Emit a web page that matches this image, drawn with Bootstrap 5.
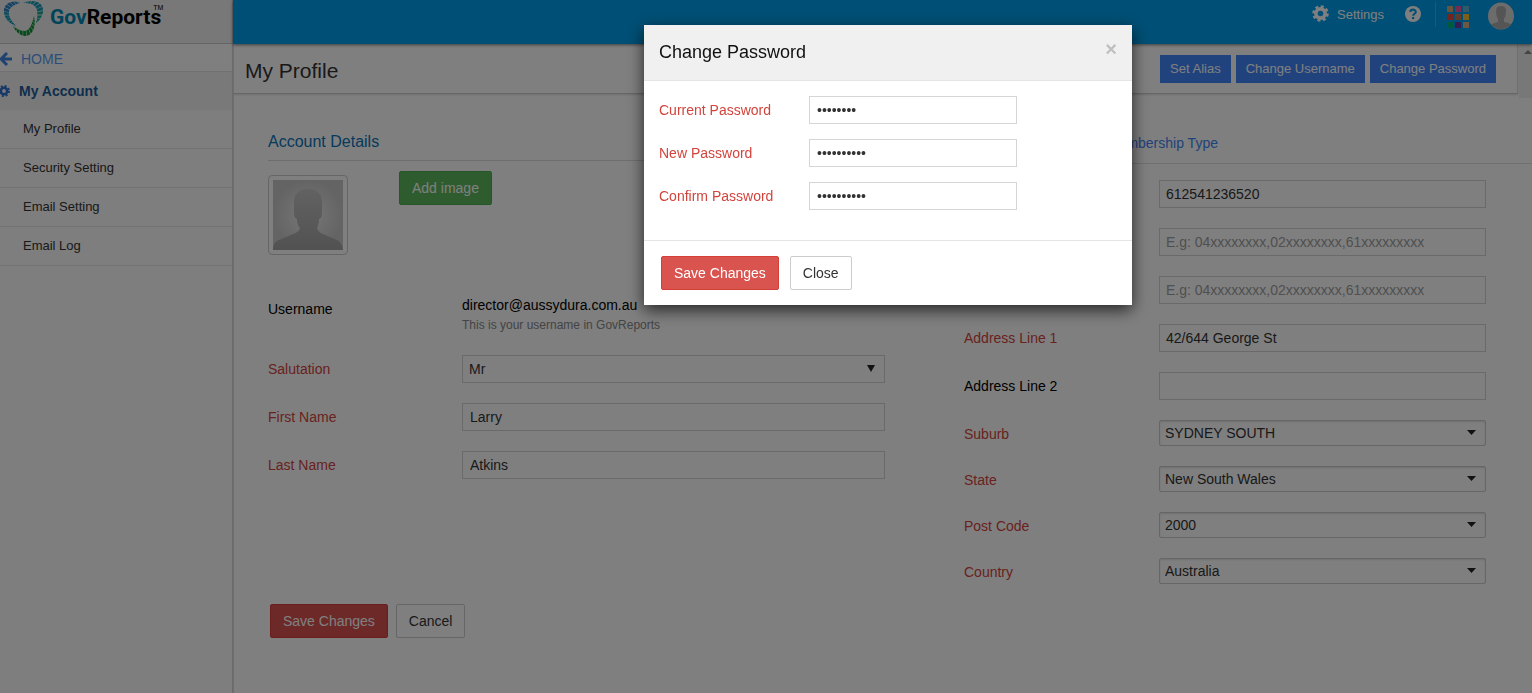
<!DOCTYPE html>
<html lang="en">
<head>
<meta charset="utf-8">
<meta name="viewport" content="width=device-width, initial-scale=1">
<title>GovReports - My Profile</title>
<link href="https://cdn.jsdelivr.net/npm/bootstrap@5.3.0/dist/css/bootstrap.min.css" rel="stylesheet">
<style>
  body { font-family: "Liberation Sans", Arial, sans-serif; font-size: 14px; line-height: 20px; color: #000; background: #fff; }
  .app-shell { min-height: 100vh; }
  .side-panel { width: 233px; background: #fcfcfc; border-right: 1px solid #d4d4d4; box-shadow: 1px 0 0 #dedede; }
  .brand-bar { height: 44px; background: #f0f0f0; border-bottom: 1px solid #ccc; padding-left: 3px; }
  .brand-name { font: 700 21px/32px Roboto, sans-serif; color: #000; margin-left: 6px; padding-top: 1px; }
  .brand-name span { color: #0288b4; }
  .brand-name sup { font: 400 7px/8px "Liberation Sans", sans-serif; top: -14px; margin-left: -8px; }
  .home-link { height: 27px; padding-top: 2px; color: #5b9bf0; text-decoration: none; background: #fff; }
  .account-link { height: 39px; font-weight: 700; color: #1d5c9c; background: #f3f3f3; border-top: 1px solid #e2e2e2; text-decoration: none; }
  .side-list a { height: 39px; padding-left: 23px; font-size: 13px; color: #333; text-decoration: none; border-bottom: 1px solid #e6e6e6; }
  .top-bar { height: 44px; background: #009fec; color: #fff; box-shadow: 0 1px 3px rgba(0,0,0,.5); padding: 2px 18px 0 0; }
  .top-bar a { color: #fff; text-decoration: none; }
  .settings-link { font-size: 13px; margin: 3px 21px 0 0; gap: 8px; }
  .help-link { margin: 4px 14px 0 0; }
  .top-rule { width: 1px; height: 25px; background: #35b5ee; margin-right: 11px; }
  .apps-link { margin: 4px 19px 0 0; }
  .top-bar svg { display: block; }
  .title-bar { height: 50px; border-bottom: 1px solid #ccc; border-right: 1px solid #ddd; padding: 0 21px 0 12px; box-shadow: 0 1px 2px #ddd; }
  .title-bar h1 { font-size: 21px; line-height: 28px; color: #333; padding-top: 4px; }
  .title-actions { gap: 5px; }
  .btn-flat { height: 28px; padding: 4px 10px; border: 0; border-radius: 0; font-size: 13px; line-height: 20px; color: #fff; background: #4287fa; }
  .btn-std { height: 34px; padding: 6px 12px; border-radius: 2px; font-size: 14px; line-height: 20px; }
  .btn-red { color: #fff; background: #d9534f; border-color: #d43f3a; }
  .btn-green { color: #fff; background: #5cb85c; border-color: #4cae4c; }
  .btn-plain { color: #333; background: #fff; border-color: #ccc; }
  .scroll-head { width: 13px; height: 54px; margin-left: 1px; padding-top: 6px; background: #f1f1f1; }
  .red-label { color: #d2443c; }
  .profile-grid { display: grid; grid-template-columns: 617fr 522fr; column-gap: 79px; padding: 0 46px 0 35px; }
  .section-head { margin: 34px 0 10px; height: 29px; font-size: 16px; line-height: 20px; font-weight: 400; color: #0b75b8; border-bottom: 1px solid #ddd; }
  .tab-head { height: 66px; margin: 0 -46px 16px 0; padding-top: 35px; gap: 48px; border-bottom: 1px solid #e0e0e0; }
  .tab-head a { color: #4285f4; text-decoration: none; }
  .photo-row { height: 124px; gap: 51px; }
  .photo-frame { width: 80px; height: 80px; margin-top: 4px; padding: 4px; border: 1px solid #ccc; border-radius: 4px; }
  .user-row { height: 60px; }
  .left-form .field-name { width: 194px; }
  .right-form .field-name { width: 195px; }
  .field-row { height: 28px; margin-bottom: 20px; }
  .combo-row { height: 26px; margin-bottom: 20px; }
  .combo-row .field-name { padding-top: 2px; }
  .box-input { height: 28px; border: 1px solid #d5d5d5; border-radius: 0; padding: 3px 7px; font-size: 14px; line-height: 20px; color: #333; background-color: #fff; }
  .right-form .box-input { padding-left: 6px; }
  .box-input::placeholder { color: #a0a0a0; opacity: 1; }
  .box-select { padding: 3px 24px 3px 6px; background-image: url("data:image/svg+xml,%3Csvg xmlns='http://www.w3.org/2000/svg' width='8' height='7'%3E%3Cpath d='M0 0h8L4 7z' fill='%23222'/%3E%3C/svg%3E"); background-size: 8px 7px; background-position: right 9px top 9px; }
  .combo-select { height: 26px; padding: 2px 24px 2px 5px; border: 1px solid #ccc; border-radius: 2px; font-size: 14px; line-height: 20px; color: #333; box-shadow: inset 0 1px 2px #ddd; background-image: url("data:image/svg+xml,%3Csvg xmlns='http://www.w3.org/2000/svg' width='9' height='5'%3E%3Cpath d='M0 0h9L4.500 5z' fill='%23222'/%3E%3C/svg%3E"); background-size: 9px 5px; background-position: right 9px top 9px; }
  .hint { font-size: 12px; line-height: 20px; color: #888; }
  .form-actions { gap: 8px; padding: 105px 0 55px 2px; }
  .dialog-pos { width: 488px; max-width: 488px; margin: 25px 0 0 calc(50vw - 122px); }
  .dialog-box { border: 0; border-radius: 0; box-shadow: 0 5px 15px rgba(0,0,0,.7); }
  .dialog-head { height: 56px; padding: 0 15px 2px; background: #f0f0f0; border-radius: 0; border-bottom: 1px solid #e5e5e5; }
  .dialog-head h2 { font-size: 18px; line-height: 24px; color: #111; }
  .x-button { padding: 0; border: 0; background: none; font: 700 20px/20px "Liberation Sans", sans-serif; color: #bfbfbf; margin-bottom: 6px; }
  .dialog-fields { padding: 15px 15px 30px; gap: 15px; }
  .dialog-fields label { width: 150px; }
  .dialog-fields input { width: 208px; }
  .dialog-foot { padding: 15px 17px; border-top: 1px solid #e5e5e5; gap: 11px; }
</style>
</head>
<body class="modal-open overflow-hidden">
<div class="app-shell d-flex">
  <aside class="side-panel flex-shrink-0">
    <div class="brand-bar d-flex align-items-start">
      <svg width="41" height="38" viewBox="0 0 41 38" aria-hidden="true">
        <path d="M17 3C9-1 0 4 1 12C2 19 6 23 13 26C8 21 5 16 6 12C6 8 10 5 17 3z" fill="#2a86c8"/>
        <path d="M1 12C2 19 6 23 13 26C8 21 5 16 6 12z" fill="#12a0bc"/>
        <path d="M20 3C29-1 39 1 40 9C40 15 37 20 33 23C35 17 35 13 34 10C32 4 27 3 20 3z" fill="#1a9cb8"/>
        <path d="M40 10C40 15 37 20 33 23C35 18 35 14 34 11z" fill="#22a890"/>
        <path d="M10 26C13 33 20 38 26 35C31 32 33 24 31 16C29 24 27 30 22 31C18 31 14 29 10 26z" fill="#12963a"/>
        <circle cx="20" cy="15" r="16" fill="none" stroke="#f0f0f0" stroke-width="22" stroke-dasharray=".5 2.6"/>
      </svg>
      <div class="brand-name"><span>Gov</span>Reports<sup>TM</sup></div>
    </div>
    <a href="#" class="home-link d-flex align-items-center">
      <svg width="13" height="14" viewBox="0 0 13 14" fill="none" stroke="#3f85e0" stroke-width="3" aria-hidden="true"><path d="M7 1L1 7l6 6M1 7h11"/></svg>
      <span class="ms-2">HOME</span>
    </a>
    <a href="#" class="account-link d-flex align-items-center">
      <svg width="11" height="12" viewBox="1 0 11 12" aria-hidden="true"><circle cx="5" cy="6" r="3.2" fill="none" stroke="#2f6fd0" stroke-width="2.6"/><circle cx="5" cy="6" r="5" fill="none" stroke="#2f6fd0" stroke-width="2" stroke-dasharray="2 1.93"/></svg>
      <span class="ms-2">My Account</span>
    </a>
    <nav class="side-list d-flex flex-column">
      <a href="#" class="d-flex align-items-center">My Profile</a>
      <a href="#" class="d-flex align-items-center">Security Setting</a>
      <a href="#" class="d-flex align-items-center">Email Setting</a>
      <a href="#" class="d-flex align-items-center">Email Log</a>
    </nav>
  </aside>

  <div class="flex-grow-1">
    <header class="top-bar d-flex justify-content-end align-items-start position-relative">
      <a href="#" class="settings-link d-flex">
        <svg width="17" height="17" viewBox="0 0 17 17" aria-hidden="true"><circle cx="8.500" cy="8.500" r="4.600" fill="none" stroke="#fff" stroke-width="3.600"/><circle cx="8.500" cy="8.500" r="7" fill="none" stroke="#fff" stroke-width="2.600" stroke-dasharray="3 2.500"/></svg>
        <span>Settings</span>
      </a>
      <a href="#" class="help-link" aria-label="Help"><svg width="16" height="16" viewBox="0 0 16 16" aria-hidden="true"><circle cx="8" cy="8" r="8" fill="#fff"/><path d="M5.3 6C5.4 2.8 10.8 2.8 10.8 6C10.8 7.800 8.200 7.700 8.200 9.700" fill="none" stroke="#009de6" stroke-width="2.100"/><path d="M7 11h2.200v2.100H7z" fill="#009de6"/></svg></a>
      <span class="top-rule"></span>
      <a href="#" class="apps-link" aria-label="Apps"><svg width="22" height="22" viewBox="0 0 22 22" aria-hidden="true"><path fill="#d2a878" d="M0 0h6v6H0z"/><path fill="#e85aa0" d="M8 0h6v6H8z"/><path fill="#62b5d0" d="M16 0h6v6h-6z"/><path fill="#e84a3a" d="M0 8h6v6H0z"/><path fill="#c07858" d="M8 8h6v6H8z"/><path fill="#f5c030" d="M16 8h6v6h-6z"/><path fill="#00b478" d="M0 16h6v6H0z"/><path fill="#6a3aa0" d="M8 16h6v6H8z"/><path fill="#d8b088" d="M16 16h6v6h-6z"/></svg></a>
      <a href="#" aria-label="User"><svg width="26" height="28" viewBox="0 0 26 28" aria-hidden="true"><ellipse cx="13" cy="14" rx="13" ry="13.500" fill="#d8d8d8"/><path d="M8 9q0-5 5-5t5 5q0 5-2 8v3q6 1 7 3-10 8-20 0 2-2 7-3v-3q-2-3-2-8" fill="#aaa"/></svg></a>
    </header>

    <div class="d-flex">
      <div class="title-bar d-flex flex-grow-1 align-items-center justify-content-between">
        <h1 class="m-0 fw-normal">My Profile</h1>
        <div class="d-flex title-actions">
          <button type="button" class="btn btn-flat">Set Alias</button>
          <button type="button" class="btn btn-flat">Change Username</button>
          <button type="button" class="btn btn-flat">Change Password</button>
        </div>
      </div>
      <div class="scroll-head d-flex justify-content-end align-items-start">
        <svg width="8" height="5" viewBox="0 0 8 5" aria-hidden="true"><path d="M4 0l4 4H0z" fill="#888"/></svg>
      </div>
    </div>

    <main class="profile-grid">
      <form class="left-form">
        <h2 class="section-head">Account Details</h2>
        <div class="photo-row d-flex align-items-start">
          <div class="photo-frame">
            <svg width="70" height="70" viewBox="0 0 70 70" class="d-block" role="img" aria-label="Profile photo">
              <defs>
                <radialGradient id="glow"><stop offset="0" stop-color="#efefef"/><stop offset="1" stop-color="#c8c8c8"/></radialGradient>
                <linearGradient id="figure" x2="0" y2="1"><stop offset="0" stop-color="#c4c4c4"/><stop offset="1" stop-color="#a4a4a4"/></linearGradient>
              </defs>
              <path d="M0 0h70v70H0z" fill="url(#glow)"/>
              <path d="M0 70C0 65 2 61 6 60L20 54Q26 52 27 48C25 46 24 42 24 39Q21 38 21 32V22C21 13 27 9 35 9S49 13 49 22V32Q49 38 46 39C46 42 45 46 44 48Q45 52 50 54L64 60C68 62 69 65 70 70z" fill="url(#figure)"/>
            </svg>
          </div>
          <button type="button" class="btn btn-std btn-green">Add image</button>
        </div>
        <div class="user-row d-flex">
          <div class="field-name pt-1 flex-shrink-0">Username</div>
          <div>
            <div>director@aussydura.com.au</div>
            <div class="hint">This is your username in GovReports</div>
          </div>
        </div>
        <div class="field-row d-flex align-items-center">
          <label class="field-name red-label flex-shrink-0" for="salutation">Salutation</label>
          <select class="form-select box-input box-select" id="salutation"><option>Mr</option><option>Mrs</option><option>Ms</option></select>
        </div>
        <div class="field-row d-flex align-items-center">
          <label class="field-name red-label flex-shrink-0" for="first">First Name</label>
          <input class="form-control box-input" id="first" type="text" value="Larry">
        </div>
        <div class="field-row d-flex align-items-center">
          <label class="field-name red-label flex-shrink-0" for="last">Last Name</label>
          <input class="form-control box-input" id="last" type="text" value="Atkins">
        </div>
        <div class="form-actions d-flex">
          <button type="submit" class="btn btn-std btn-red">Save Changes</button>
          <button type="button" class="btn btn-std btn-plain">Cancel</button>
        </div>
      </form>

      <form class="right-form">
        <div class="tab-head d-flex align-items-start">
          <a href="#">Contact Details</a>
          <a href="#">Membership Type</a>
        </div>
        <div class="field-row d-flex align-items-center">
          <label class="field-name red-label flex-shrink-0" for="phone">Phone</label>
          <input class="form-control box-input" id="phone" type="text" value="612541236520">
        </div>
        <div class="field-row d-flex align-items-center">
          <label class="field-name flex-shrink-0" for="mobile">Mobile</label>
          <input class="form-control box-input" id="mobile" type="text" placeholder="E.g: 04xxxxxxxx,02xxxxxxxx,61xxxxxxxxx">
        </div>
        <div class="field-row d-flex align-items-center">
          <label class="field-name flex-shrink-0" for="fax">Fax</label>
          <input class="form-control box-input" id="fax" type="text" placeholder="E.g: 04xxxxxxxx,02xxxxxxxx,61xxxxxxxxx">
        </div>
        <div class="field-row d-flex align-items-center">
          <label class="field-name red-label flex-shrink-0" for="line1">Address Line 1</label>
          <input class="form-control box-input" id="line1" type="text" value="42/644 George St">
        </div>
        <div class="field-row d-flex align-items-center">
          <label class="field-name flex-shrink-0" for="line2">Address Line 2</label>
          <input class="form-control box-input" id="line2" type="text">
        </div>
        <div class="combo-row d-flex align-items-center">
          <label class="field-name red-label flex-shrink-0" for="suburb">Suburb</label>
          <select class="form-select combo-select" id="suburb"><option>SYDNEY SOUTH</option></select>
        </div>
        <div class="combo-row d-flex align-items-center">
          <label class="field-name red-label flex-shrink-0" for="state">State</label>
          <select class="form-select combo-select" id="state"><option>New South Wales</option></select>
        </div>
        <div class="combo-row d-flex align-items-center">
          <label class="field-name red-label flex-shrink-0" for="post">Post Code</label>
          <select class="form-select combo-select" id="post"><option>2000</option></select>
        </div>
        <div class="combo-row d-flex align-items-center">
          <label class="field-name red-label flex-shrink-0" for="country">Country</label>
          <select class="form-select combo-select" id="country"><option>Australia</option></select>
        </div>
      </form>
    </main>
  </div>
</div>

<div class="modal-backdrop show"></div>
<div class="modal d-block" role="dialog" aria-modal="true" aria-labelledby="dialogTitle">
  <div class="modal-dialog dialog-pos">
    <form class="modal-content dialog-box">
      <div class="modal-header dialog-head">
        <h2 class="m-0 fw-normal" id="dialogTitle">Change Password</h2>
        <button type="button" class="x-button" aria-label="Close dialog">×</button>
      </div>
      <div class="dialog-fields d-flex flex-column">
        <div class="d-flex align-items-center">
          <label class="red-label" for="current">Current Password</label>
          <input class="form-control box-input" id="current" type="password" value="password">
        </div>
        <div class="d-flex align-items-center">
          <label class="red-label" for="fresh">New Password</label>
          <input class="form-control box-input" id="fresh" type="password" value="password12">
        </div>
        <div class="d-flex align-items-center">
          <label class="red-label" for="confirm">Confirm Password</label>
          <input class="form-control box-input" id="confirm" type="password" value="password12">
        </div>
      </div>
      <div class="dialog-foot d-flex">
        <button type="submit" class="btn btn-std btn-red">Save Changes</button>
        <button type="button" class="btn btn-std btn-plain">Close</button>
      </div>
    </form>
  </div>
</div>
<script src="https://cdn.jsdelivr.net/npm/bootstrap@5.3.0/dist/js/bootstrap.bundle.min.js"></script>
</body>
</html>
